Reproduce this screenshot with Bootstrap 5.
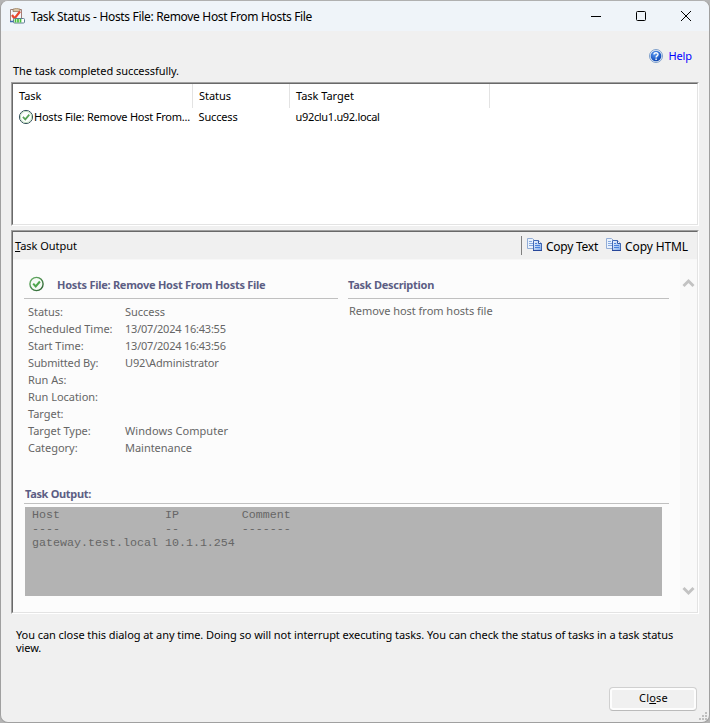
<!DOCTYPE html>
<html lang="en">
<head>
<meta charset="utf-8">
<meta name="viewport" content="width=device-width, initial-scale=1">
<title>Task Status - Hosts File: Remove Host From Hosts File</title>
<link href="https://cdn.jsdelivr.net/npm/bootstrap@5.3.0/dist/css/bootstrap.min.css" rel="stylesheet">
<style>
  html, body { height: 100%; }
  body { background: #b4b4b4; font: 11px/13px "Noto Sans", "Open Sans", sans-serif; color: #000; overflow: hidden; letter-spacing: -.03px; }
  svg { display: block; flex: none; }
  .dialog { width: 710px; height: 723px; background: #f0f0f0; border: 1px solid #a0a0a0; border-top-color: #b0b0b0; border-radius: 8px; overflow: hidden; }
  .titlebar { height: 30px; background: #eff4f9; padding-left: 8px; }
  .caption { font-size: 12px; letter-spacing: -.325px; padding: 1px 0 0 6px; }
  .caption-buttons { gap: 33px; padding-right: 17px; }
  .help-line { height: 31px; padding: 18px 17px 0 0; }
  .help-link { color: #00f; letter-spacing: -.1px; line-height: 14px; height: 14px; gap: 5px; }
  .summary { height: 20px; padding: 2px 0 0 12px; letter-spacing: -.053px; }
  .sunken { margin: 0 10px; border: 1px solid; border-color: #a0a0a0 #fff #fff #a0a0a0; }
  .sunken-in { border: 1px solid; border-color: #696969 #e3e3e3 #e3e3e3 #696969; height: 100%; background: #fff; overflow: hidden; }
  .tasks { height: 144px; }
  .task-grid { display: grid; grid-template-columns: 180px 97px 200px 1fr; }
  .head-cell { height: 24px; border-right: 1px solid #e3e3e3; line-height: 24px; padding-left: 6px; }
  .row-cell { height: 18px; line-height: 18px; padding-left: 5.500px; white-space: nowrap; }
  .row-cell:first-child, .row-name { padding-left: 5px; letter-spacing: -.216px; }
  .row-result { letter-spacing: -.163px; }
  .row-host { letter-spacing: -.332px; }
  .output { height: 385px; margin-top: 4px; }
  .toolbar { height: 28px; background: #f0f0f0; padding: 0 9px 0 2px; border-bottom: 1px solid #f7f7f7; }
  .tool { font-size: 12px; gap: 3px; line-height: 16px; }
  .tool span { padding-top: 3px; }
  .copy-text { letter-spacing: -.252px; }
  .copy-html { letter-spacing: -.107px; }
  .separator { width: 1px; height: 19px; background: #808080; margin: 1px 5px 0 0; }
  .report { background: #fcfcfc; color: #666; padding: 9px 11px 0 11px; }
  .summary-col { width: 314px; }
  .about-col { margin-left: 10px; }
  .about-text { padding: 5px 0 0 1px; }
  .scroller { width: 17px; background: #f9f9f9; padding: 17px 0 16px 2px; }
  .report-title { color: #5c5e84; font-weight: 700; border-bottom: 1px solid #c0c0c0; letter-spacing: -.265px; }
  .pair-head { height: 30px; padding-top: 7px; }
  .pair-head span { padding-top: 2px; }
  .head-label { margin-left: 13px; }
  .fields { display: grid; grid-template-columns: 97px 1fr; grid-auto-rows: 17px; line-height: 17px; padding: 4px 0 0 4px; margin: 0; }
  .fields dt, .fields dd { font-weight: 400; margin: 0; white-space: nowrap; }
  .fields .stamp { letter-spacing: -.225px; }
  .fields .snug { letter-spacing: -.15px; }
  .fields .wide { letter-spacing: .07px; }
  .output-head { margin-top: 31px; height: 17px; padding-left: 1px; letter-spacing: -.321px; }
  .console { margin: 3px 7px 0 1px; height: 89px; background: #b3b3b3; color: #666; padding: 1px 0 0 7px; font: 11.665px/14px "Liberation Mono", monospace; letter-spacing: 0; overflow: hidden; }
  .note { padding: 14px 24px 0 15px; letter-spacing: -.062px; height: 73px; }
  .close-btn { width: 88px; height: 24px; margin-right: 12px; padding: 0 0 2px 1px; border: 1px solid #d0d0d0; border-bottom-color: #bababa; border-radius: 4px; background: #f0f0f0; box-shadow: inset 0 0 0 2px #fdfdfd; font-size: 11px; line-height: 20px; color: #000; letter-spacing: .2px; }
</style>
</head>
<body>
<svg width="0" height="0" class="position-absolute" aria-hidden="true">
  <defs>
    <linearGradient id="ring" x1="0" y1="0" x2="1" y2="1"><stop offset="0" stop-color="#6cb56a"/><stop offset="1" stop-color="#2b5f31"/></linearGradient>
    <linearGradient id="sheet" x1="0" y1="0" x2="1" y2="1"><stop offset="0" stop-color="#f3f8ff"/><stop offset="1" stop-color="#7da9ea"/></linearGradient>
    <radialGradient id="orb" cx=".4" cy=".3" r=".8"><stop offset="0" stop-color="#5f9df0"/><stop offset=".7" stop-color="#1b57c4"/><stop offset="1" stop-color="#0e3b94"/></radialGradient>
    <symbol id="copy" viewBox="0 0 16 16">
      <path d="M.5 1.500h5l3 3v7h-8z" fill="#e9f2fd" stroke="#93add6"/>
      <path d="M2 4.500h3M2 6.500h4M2 8.500h4" stroke="#86a9df"/>
      <path d="M6.500 3.500h5l3 3v7h-8z" fill="url(#sheet)" stroke="#4269b4"/>
      <path d="M11.500 3.500v3h3" fill="#fff" stroke="#3158a6"/>
      <path d="M8 6.500h2M8 8.500h5M8 10.500h5" stroke="#4a83dd"/>
      <path d="M6 13.500h9" stroke="#27479a"/>
    </symbol>
  </defs>
</svg>
<main class="dialog d-flex flex-column">
  <header class="titlebar d-flex align-items-center">
    <svg width="16" height="16" viewBox="0 0 16 16">
      <path d="M1.500 1.500h11v12h-11z" fill="#f4f6fb" stroke="#a08078"/>
      <path d="M1 13.500h11" stroke="#3c6cb4" stroke-width="1.500"/>
      <path d="M4 1h1.500l1-1h2l1 1H11v2.500H4z" fill="#d8c4a4" stroke="#8a7056" stroke-width=".7"/>
      <path d="M3 7l2.500 3.500L11 3.500" fill="none" stroke="#e8472e" stroke-width="2.200"/>
      <rect x="4.500" y="10.500" width="11" height="4.500" rx="1" fill="#fff" stroke="#5f7f93"/>
      <path d="M6.500 11v3.500M9 11v3.500M11.500 11v3.500" stroke="#45bf3c" stroke-width="1.700"/>
    </svg>
    <span class="caption me-auto">Task Status - Hosts File: Remove Host From Hosts File</span>
    <div class="caption-buttons d-flex align-items-center">
      <svg width="12" height="12" viewBox="0 0 12 12"><path d="M1 6.500h10" stroke="#000"/></svg>
      <svg width="12" height="12" viewBox="0 0 12 12"><rect x="1.500" y="1.500" width="9" height="9" rx="1" fill="none" stroke="#000"/></svg>
      <svg width="12" height="12" viewBox="0 0 12 12"><path d="M1 1l10 10M11 1L1 11" stroke="#000"/></svg>
    </div>
  </header>
  <div class="help-line d-flex justify-content-end">
    <a href="#" class="help-link d-flex align-items-center text-decoration-none">
      <svg width="14" height="14" viewBox="0 0 14 14"><circle cx="7" cy="7" r="6.500" fill="#e3ecf7" stroke="#7f9fca"/><circle cx="7" cy="7" r="5.300" fill="url(#orb)"/><path d="M5 5.600C5 3 9.200 3.200 9 5.500 8.900 6.900 7.100 6.800 7.100 8.400M7.100 9.400v1.500" fill="none" stroke="#fff" stroke-width="1.400"/></svg>
      <span>Help</span>
    </a>
  </div>
  <div class="summary">The task completed successfully.</div>

  <section class="sunken tasks"><div class="sunken-in">
    <div class="task-grid">
      <div class="head-cell">Task</div><div class="head-cell">Status</div><div class="head-cell">Task Target</div><div></div>
      <div class="row-cell row-name d-flex"><svg width="16" height="16" viewBox="0 0 16 16" class="mt-0"><circle cx="8" cy="9" r="6.600" fill="#fff" stroke="#3a5560" stroke-width="1"/><circle cx="8" cy="9" r="5.600" fill="none" stroke="#b9dcb6" stroke-width=".9"/><path d="M4.900 8.800l2.400 2.600 4-4.800" fill="none" stroke="#58a556" stroke-width="1.700"/></svg><span>Hosts File: Remove Host From...</span></div>
      <div class="row-cell row-result">Success</div>
      <div class="row-cell row-host">u92clu1.u92.local</div>
    </div>
  </div></section>

  <section class="sunken output"><div class="sunken-in d-flex flex-column">
    <div class="toolbar d-flex align-items-center">
      <span class="me-auto"><u>T</u>ask Output</span>
      <span class="separator"></span>
      <span class="tool copy-text d-flex align-items-center me-2"><svg width="16" height="16"><use href="#copy"/></svg><span>Copy Text</span></span>
      <span class="tool copy-html d-flex align-items-center"><svg width="16" height="16"><use href="#copy"/></svg><span>Copy HTML</span></span>
    </div>
    <div class="d-flex flex-fill">
      <div class="report flex-fill">
        <div class="d-flex">
          <div class="summary-col">
            <div class="report-title pair-head d-flex">
              <svg width="16" height="16" viewBox="0 0 16 16" class="ms-1"><circle cx="8.500" cy="8" r="6.600" fill="#f6fbf5" stroke="url(#ring)" stroke-width="1.400"/><path d="M5.200 7.700l2.500 2.800 4.200-5" fill="none" stroke="#4ea64c" stroke-width="2"/></svg>
              <span class="head-label">Hosts File: Remove Host From Hosts File</span>
            </div>
            <dl class="fields">
              <dt>Status:</dt><dd>Success</dd>
              <dt>Scheduled Time:</dt><dd class="stamp">13/07/2024 16:43:55</dd>
              <dt>Start Time:</dt><dd class="stamp">13/07/2024 16:43:56</dd>
              <dt class="snug">Submitted By:</dt><dd class="snug">U92\Administrator</dd>
              <dt>Run As:</dt><dd></dd>
              <dt>Run Location:</dt><dd></dd>
              <dt>Target:</dt><dd></dd>
              <dt>Target Type:</dt><dd class="wide">Windows Computer</dd>
              <dt>Category:</dt><dd>Maintenance</dd>
            </dl>
          </div>
          <div class="about-col flex-fill">
            <div class="report-title pair-head d-flex"><span>Task Description</span></div>
            <div class="about-text">Remove host from hosts file</div>
          </div>
        </div>
        <div class="report-title output-head">Task Output:</div>
        <pre class="console">Host               IP         Comment
----               --         -------
gateway.test.local 10.1.1.254</pre>
      </div>
      <div class="scroller d-flex flex-column justify-content-between">
        <svg width="13" height="11" viewBox="0 0 13 11"><path d="M1.500 9l5-5 5 5" fill="none" stroke="#c2c2c2" stroke-width="2.900"/></svg>
        <svg width="13" height="11" viewBox="0 0 13 11"><path d="M1.500 3l5 5 5-5" fill="none" stroke="#c2c2c2" stroke-width="2.900"/></svg>
      </div>
    </div>
  </div></section>

  <p class="note m-0">You can close this dialog at any time. Doing so will not interrupt executing tasks. You can check the status of tasks in a task status view.</p>
  <div class="d-flex justify-content-end"><button type="button" class="btn close-btn">Cl<u>o</u>se</button></div>
  <div class="d-flex justify-content-end"><svg width="11" height="11" viewBox="0 0 11 11"><path d="M7 1h2v2H7zM7 4h2v2H7zM4 4h2v2H4zM7 7h2v2H7zM4 7h2v2H4zM1 7h2v2H1z" fill="#bfbfbf"/></svg></div>
</main>
<script src="https://cdn.jsdelivr.net/npm/bootstrap@5.3.0/dist/js/bootstrap.bundle.min.js"></script>
</body>
</html>
